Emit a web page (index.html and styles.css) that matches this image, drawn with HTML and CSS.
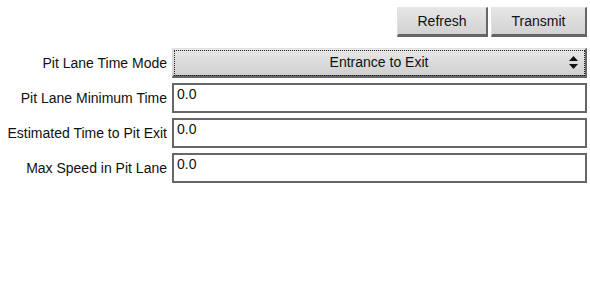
FILE: index.html
```html
<!DOCTYPE html>
<html>
<head>
<meta charset="utf-8">
<link rel="stylesheet" href="styles.css">
</head>
<body>
<div class="page">
  <div class="toolbar">
    <div class="btn btn-refresh">Refresh</div>
    <div class="btn btn-transmit">Transmit</div>
  </div>
  <div class="form">
    <div class="label">Pit Lane Time Mode</div>
    <div class="select">
      <span class="select-text">Entrance to Exit</span>
      <svg class="arrows" width="9" height="13" viewBox="0 0 9 13"><polygon points="4.5,0 9,5 0,5" fill="#111"/><polygon points="0,8 9,8 4.5,13" fill="#111"/></svg>
    </div>
    <div class="label">Pit Lane Minimum Time</div>
    <div class="input">0.0</div>
    <div class="label">Estimated Time to Pit Exit</div>
    <div class="input">0.0</div>
    <div class="label">Max Speed in Pit Lane</div>
    <div class="input">0.0</div>
  </div>
</div>
</body>
</html>
```
FILE: styles.css
```css
html, body {
  margin: 0;
  padding: 0;
  background: #fff;
}
body {
  font-family: "Liberation Sans", Arial, sans-serif;
  font-size: 14px;
  color: #111;
}
.page {
  width: 590px;
  height: 295px;
}
.toolbar {
  display: flex;
  justify-content: flex-end;
  gap: 3px;
  padding: 7px 3px 0 0;
}
.btn {
  box-sizing: border-box;
  height: 30px;
  display: flex;
  align-items: center;
  justify-content: center;
  background: linear-gradient(#e6e6e6, #d2d2d2);
  border-top: 1px solid #e8e8e8;
  border-left: 1px solid #e0e0e0;
  border-right: 2px solid #666;
  border-bottom: 3px solid #666;
  color: #111;
}
.btn-refresh { width: 91px; }
.btn-transmit { width: 96px; }
.form {
  display: grid;
  grid-template-columns: 167px 415px;
  column-gap: 5px;
  row-gap: 5px;
  margin-top: 11px;
  align-items: center;
}
.label {
  text-align: right;
  white-space: nowrap;
}
.select {
  box-sizing: border-box;
  height: 30px;
  position: relative;
  display: flex;
  align-items: center;
  justify-content: center;
  background: linear-gradient(#e8e8e8, #d0d0d0);
  border-top: 1px solid #e2e2e2;
  border-left: 1px solid #d8d8d8;
  border-right: 2px solid #666;
  border-bottom: 3px solid #666;
  outline: 1px dotted #222;
  outline-offset: -3px;
}
.arrows {
  position: absolute;
  right: 7px;
  top: 7px;
}
.input {
  box-sizing: border-box;
  height: 30px;
  border: 2px solid #666;
  background: #fff;
  padding: 1px 3px;
  line-height: 16px;
}
```
